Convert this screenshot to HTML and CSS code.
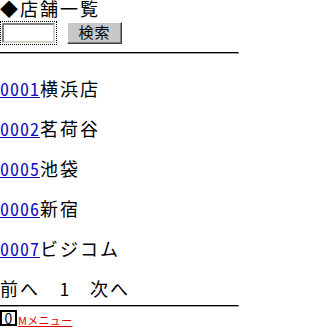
FILE: index.html
```html
<!DOCTYPE html>
<html lang="ja">
<head>
<meta charset="utf-8">
<title>店舗一覧</title>
<link rel="stylesheet" href="styles.css">
</head>
<body>
<div class="title"><span class="mark">◆</span>店舗一覧</div>
<form class="search">
  <span class="field"><input class="box" type="text"></span>
  <button class="btn" type="button">検索</button>
</form>
<hr class="rule top-rule">
<div class="list">
  <p class="row"><a class="code" href="#">0001</a>横浜店</p>
  <p class="row"><a class="code" href="#">0002</a>茗荷谷</p>
  <p class="row"><a class="code" href="#">0005</a>池袋</p>
  <p class="row"><a class="code" href="#">0006</a>新宿</p>
  <p class="row"><a class="code" href="#">0007</a>ビジコム</p>
</div>
<div class="pager">前へ　<span class="num">1</span>　次へ</div>
<hr class="rule bottom-rule">
<div class="footer"><span class="key">0</span><a class="menu" href="#">Mメニュー</a></div>
</body>
</html>
```
FILE: styles.css
```css
html, body {
  margin: 0;
  padding: 0;
  background: #fff;
}
body {
  width: 240px;
  font-family: "Noto Sans CJK JP", "Noto Sans", sans-serif;
  font-size: 18px;
  letter-spacing: 2px;
  color: #000;
}
.title {
  font-family: "Liberation Sans", "Noto Sans CJK JP", sans-serif;
  line-height: 21px;
  white-space: nowrap;
}
.mark {
  display: inline-block;
  width: 20px;
  letter-spacing: 0;
  line-height: 21px;
}
.search {
  margin: 0;
  display: flex;
  align-items: flex-start;
  height: 24px;
}
.field {
  display: block;
  box-sizing: border-box;
  width: 57px;
  height: 24px;
  border: 1px dotted #000;
  padding: 1px;
}
.box {
  display: block;
  box-sizing: border-box;
  width: 100%;
  height: 100%;
  margin: 0;
  padding: 0;
  border: 2px solid;
  border-color: #808080 #d4d0c8 #d4d0c8 #808080;
  background: #fff;
  outline: none;
}
.btn {
  box-sizing: border-box;
  margin: 1px 0 0 10px;
  width: 55px;
  height: 22px;
  padding: 0;
  font-family: "Liberation Sans", "Noto Sans CJK JP", sans-serif;
  font-size: 15px;
  letter-spacing: 1px;
  line-height: 18px;
  color: #000;
  background: #c8c8c8;
  border: 1px solid;
  border-color: #fff #404040 #404040 #fff;
  box-shadow: inset -1px -1px 0 #808080;
}
.rule {
  display: block;
  height: 0;
  width: 238px;
  border: 0;
  border-top: 1px solid #000;
  border-bottom: 1px solid #a0a0a0;
  border-right: 1px solid #c0c0c0;
  box-sizing: content-box;
  margin: 0;
}
.top-rule {
  margin-top: 7px;
}
.list {
  margin-top: 22px;
}
.row {
  margin: 0 0 16px 0;
  line-height: 24px;
  white-space: nowrap;
}
.code {
  color: #1010c0;
  text-decoration: underline;
  letter-spacing: 1px;
  font-feature-settings: "hwid" 1;
}
.pager {
  line-height: 24px;
  white-space: nowrap;
}
.num {
  letter-spacing: 1px;
  font-feature-settings: "hwid" 1;
}
.bottom-rule {
  margin-top: 5px;
}
.footer {
  margin-top: 3px;
  display: flex;
  align-items: flex-end;
  height: 19px;
}
.key {
  display: block;
  box-sizing: border-box;
  width: 17px;
  height: 16px;
  margin-bottom: 3px;
  border: 2px solid #000;
  font-size: 14px;
  line-height: 12px;
  letter-spacing: 0;
  text-align: center;
  color: #000;
  background: #fff;
}
.menu {
  margin-left: 1px;
  font-size: 11px;
  line-height: 14px;
  letter-spacing: 0.3px;
  color: #e00000;
  text-decoration: underline;
  margin-bottom: 2px;
}
```
